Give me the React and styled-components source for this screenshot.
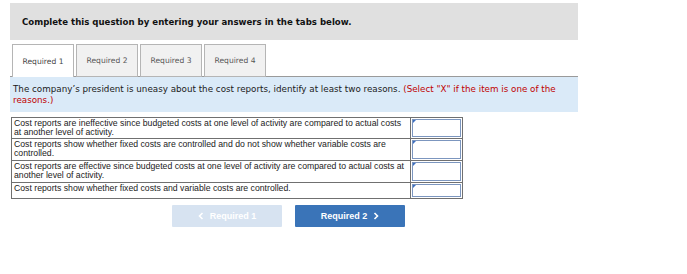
import styled, { createGlobalStyle } from "styled-components";

const GlobalStyle = createGlobalStyle`
  body {
    margin: 0;
    background: #fff;
    font-family: "DejaVu Sans", Verdana, sans-serif;
  }
`;

const Page = styled.div`
  width: 568px;
  padding: 3px 0 0 10px;
`;

const Banner = styled.div`
  background: #e0e0e0;
  height: 37px;
  display: flex;
  align-items: center;
  padding-left: 12px;
  font-weight: bold;
  font-size: 8.6px;
  color: #111;
`;

const TabRow = styled.div`
  display: flex;
  gap: 2px;
  margin-top: 4px;
  padding-left: 2px;
  border-bottom: 1px solid #9a9a9a;
  height: 32px;
`;

const Tab = styled.div`
  width: 60px;
  height: ${(p) => (p.$active ? "32px" : "31px")};
  border: 1px solid #b5b5b5;
  border-bottom: ${(p) => (p.$active ? "none" : "1px solid #b5b5b5")};
  background: ${(p) => (p.$active ? "#fff" : "#f1f1f1")};
  display: flex;
  align-items: center;
  justify-content: center;
  font-size: 7.6px;
  color: ${(p) => (p.$active ? "#444" : "#555")};
  margin-bottom: ${(p) => (p.$active ? "-1px" : "0")};
`;

const Prompt = styled.div`
  background: #daeaf8;
  height: 35px;
  box-sizing: border-box;
  padding: 7px 3px 0;
  font-size: 8.75px;
  line-height: 10.5px;
  color: #1a1a1a;
`;

const Note = styled.span`
  color: #c00000;
`;

const Table = styled.div`
  margin: 5px 0 0 1px;
  width: 450px;
  border: 1px solid #707070;
  font-family: "Liberation Sans", Arial, sans-serif;
  font-size: 8.7px;
  color: #222;
`;

const Row = styled.div`
  display: grid;
  grid-template-columns: 1fr 51px;
  border-top: ${(p) => (p.$first ? "none" : "1px solid #707070")};
  height: ${(p) => p.$h}px;
`;

const Cell = styled.div`
  padding: 1px 2px 0;
  line-height: 9px;
  border-right: 1px solid #707070;
  overflow: hidden;
`;

const Answer = styled.div`
  position: relative;
  margin: 1px;
  border: 1px solid #7c96bf;
  background: #fff;
  &::before {
    content: "";
    position: absolute;
    left: 0;
    top: 0;
    border-top: 3px solid #3d6fc0;
    border-right: 3px solid transparent;
  }
`;

const Nav = styled.div`
  display: flex;
  gap: 13px;
  margin: 6px 0 0 162px;
`;

const NavButton = styled.div`
  width: 110px;
  height: 22px;
  display: flex;
  align-items: center;
  justify-content: center;
  gap: 6px;
  font-family: "Liberation Sans", Arial, sans-serif;
  font-weight: bold;
  font-size: 9px;
  color: #fff;
  border-radius: 1px;
  background: ${(p) => (p.$disabled ? "#d7e3f1" : "#3a74b8")};
`;

const Chevron = ({ dir }) => (
  <svg width="6" height="8" viewBox="0 0 6 8">
    <path
      d={dir === "left" ? "M4.5 1 L1.5 4 L4.5 7" : "M1.5 1 L4.5 4 L1.5 7"}
      fill="none"
      stroke="#fff"
      strokeWidth="1.6"
    />
  </svg>
);

const rows = [
  {
    h: 20,
    text: "Cost reports are ineffective since budgeted costs at one level of activity are compared to actual costs at another level of activity.",
  },
  {
    h: 21,
    text: "Cost reports show whether fixed costs are controlled and do not show whether variable costs are controlled.",
  },
  {
    h: 21,
    text: "Cost reports are effective since budgeted costs at one level of activity are compared to actual costs at another level of activity.",
  },
  { h: 15, text: "Cost reports show whether fixed costs and variable costs are controlled." },
];

const App = () => (
  <Page>
    <GlobalStyle />
    <Banner>Complete this question by entering your answers in the tabs below.</Banner>
    <TabRow>
      <Tab $active>Required 1</Tab>
      <Tab>Required 2</Tab>
      <Tab>Required 3</Tab>
      <Tab>Required 4</Tab>
    </TabRow>
    <Prompt>
      The company’s president is uneasy about the cost reports, identify at least two reasons.{" "}
      <Note>(Select "X" if the item is one of the reasons.)</Note>
    </Prompt>
    <Table>
      {rows.map((r, i) => (
        <Row key={i} $first={i === 0} $h={r.h}>
          <Cell>{r.text}</Cell>
          <Answer />
        </Row>
      ))}
    </Table>
    <Nav>
      <NavButton $disabled>
        <Chevron dir="left" /> Required 1
      </NavButton>
      <NavButton>
        Required 2 <Chevron dir="right" />
      </NavButton>
    </Nav>
  </Page>
);

export default App;
